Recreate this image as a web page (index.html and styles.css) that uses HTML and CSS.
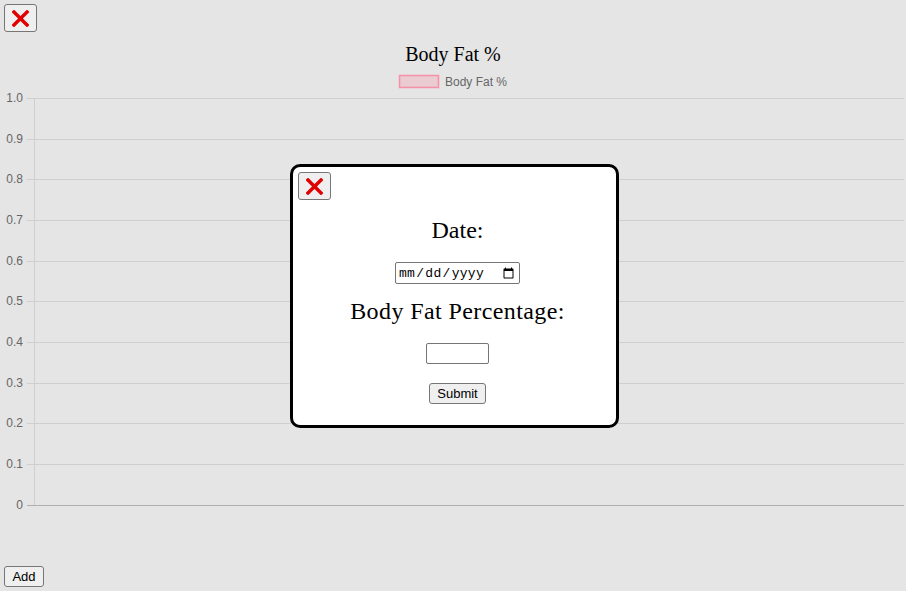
FILE: index.html
```html
<!DOCTYPE html>
<html>
<head>
<meta charset="utf-8">
<link rel="stylesheet" href="styles.css">
</head>
<body>
<div class="page">
  <div class="toolbar">
    <button class="close-btn" type="button" aria-label="Close">
      <svg width="17" height="17" viewBox="0 0 17 17"><path d="M2 2 L15 15 M15 2 L2 15" stroke="#e00000" stroke-width="3.4" stroke-linecap="square"/></svg>
    </button>
  </div>
  <svg class="chart" width="906" height="530" viewBox="0 0 906 530">
    <text x="453" y="29" text-anchor="middle" class="title">Body Fat %</text>
    <rect x="399.5" y="43.5" width="39" height="12" fill="rgba(255,99,132,0.2)" stroke="rgba(255,99,132,0.6)" stroke-width="1.5"/>
    <text x="445" y="54" class="legend">Body Fat %</text>
    <g class="grid">
      <line x1="27" y1="66.5" x2="904" y2="66.5"/>
      <line x1="27" y1="107.5" x2="904" y2="107.5"/>
      <line x1="27" y1="147.5" x2="904" y2="147.5"/>
      <line x1="27" y1="188.5" x2="904" y2="188.5"/>
      <line x1="27" y1="229.5" x2="904" y2="229.5"/>
      <line x1="27" y1="269.5" x2="904" y2="269.5"/>
      <line x1="27" y1="310.5" x2="904" y2="310.5"/>
      <line x1="27" y1="351.5" x2="904" y2="351.5"/>
      <line x1="27" y1="391.5" x2="904" y2="391.5"/>
      <line x1="27" y1="432.5" x2="904" y2="432.5"/>
      <line x1="34.5" y1="66" x2="34.5" y2="473"/>
    </g>
    <line x1="27" y1="473.5" x2="904" y2="473.5" class="axis"/>
    <g class="ticks">
      <text x="23" y="70">1.0</text>
      <text x="23" y="111">0.9</text>
      <text x="23" y="151">0.8</text>
      <text x="23" y="192">0.7</text>
      <text x="23" y="233">0.6</text>
      <text x="23" y="273">0.5</text>
      <text x="23" y="314">0.4</text>
      <text x="23" y="355">0.3</text>
      <text x="23" y="395">0.2</text>
      <text x="23" y="436">0.1</text>
      <text x="23" y="477">0</text>
    </g>
  </svg>
  <div class="footer">
    <button class="btn" type="button">Add</button>
  </div>

  <div class="modal">
    <div class="modal-head">
      <button class="close-btn" type="button" aria-label="Close">
        <svg width="17" height="17" viewBox="0 0 17 17"><path d="M2 2 L15 15 M15 2 L2 15" stroke="#e00000" stroke-width="3.4" stroke-linecap="square"/></svg>
      </button>
    </div>
    <form class="modal-form">
      <label class="field-label label-date">Date:</label>
      <input class="date-input" type="date">
      <label class="field-label label-pct">Body Fat Percentage:</label>
      <input class="num-input" type="text">
      <button class="btn submit" type="button">Submit</button>
    </form>
  </div>
</div>
</body>
</html>
```

FILE: styles.css
```css
html, body {
  margin: 0;
  padding: 0;
}
body {
  background: #e5e5e5;
  width: 906px;
  height: 591px;
  overflow: hidden;
  font-family: "Liberation Serif", "Times New Roman", serif;
}
.page {
  position: relative;
  width: 906px;
  height: 591px;
}
.toolbar {
  padding: 4px 0 0 4px;
  height: 28px;
}
.close-btn {
  display: flex;
  align-items: center;
  justify-content: center;
  width: 33px;
  height: 28px;
  padding: 0;
  margin: 0;
  background: #efefef;
  border: 1px solid #767676;
  border-radius: 3px;
  box-sizing: border-box;
}
.chart {
  display: block;
}
.title {
  font-family: "Liberation Serif", serif;
  font-size: 20px;
  fill: #000;
}
.legend {
  font-family: "Liberation Sans", Arial, sans-serif;
  font-size: 12px;
  fill: #666;
}
.grid line {
  stroke: #cfcfcf;
  stroke-width: 1;
}
.axis {
  stroke: #b0b0b0;
  stroke-width: 1;
}
.ticks text {
  font-family: "Liberation Sans", Arial, sans-serif;
  font-size: 12px;
  fill: #666;
  text-anchor: end;
}
.footer {
  padding: 4px 0 0 4px;
}
.btn {
  font-family: "Liberation Sans", Arial, sans-serif;
  font-size: 13px;
  height: 21px;
  padding: 0 6px;
  margin: 0;
  background: #efefef;
  border: 1px solid #767676;
  border-radius: 3px;
  color: #000;
  box-sizing: border-box;
}
.footer .btn {
  width: 40px;
}
.modal {
  position: absolute;
  left: 290px;
  top: 164px;
  width: 329px;
  height: 264px;
  box-sizing: border-box;
  background: #fff;
  border: 3px solid #000;
  border-radius: 10px;
  padding: 5px;
  display: flex;
  flex-direction: column;
}
.modal-form {
  display: flex;
  flex-direction: column;
  align-items: center;
  margin: 0;
  padding-left: 6px;
}
.field-label {
  display: block;
  font-size: 24px;
  line-height: 28px;
  color: #000;
}
.label-date {
  margin-top: 16px;
}
.date-input {
  margin-top: 18px;
  width: 125px;
  height: 22px;
  box-sizing: border-box;
  font-family: "Liberation Mono", monospace;
  font-size: 13px;
  letter-spacing: 0.3px;
  padding: 0 2px;
  border: 1px solid #767676;
  border-radius: 2px;
  background: #fff;
}
.label-pct {
  margin-top: 13px;
  letter-spacing: 0.4px;
}
.num-input {
  margin-top: 18px;
  width: 63px;
  height: 21px;
  box-sizing: border-box;
  border: 1px solid #767676;
  border-radius: 2px;
  padding: 0 2px;
}
.submit {
  margin-top: 19px;
  width: 57px;
}
```
